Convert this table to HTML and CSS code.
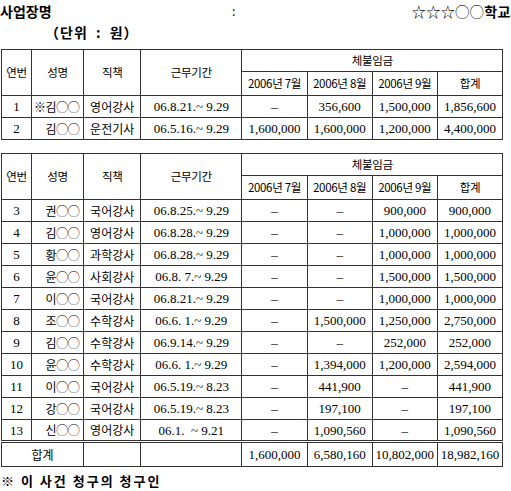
FILE: index.html
```html
<!DOCTYPE html>
<html>
<head>
<meta charset="utf-8">
<title>체불임금 내역</title>
<link rel="stylesheet" href="styles.css">
</head>
<body>

<div class="top">
  <div class="title">사업장명</div>
  <div class="colon">:</div>
  <div class="school">☆☆☆◯◯<b>학교</b></div>
</div>
<div class="unit">（단위 : 원）</div>

<table class="pay first">
  <colgroup>
    <col class="c-no"><col class="c-name"><col class="c-job"><col class="c-date">
    <col class="c-m"><col class="c-m"><col class="c-m"><col class="c-m">
  </colgroup>
  <tr class="h1">
    <th rowspan="2">연번</th>
    <th rowspan="2">성명</th>
    <th rowspan="2">직책</th>
    <th rowspan="2">근무기간</th>
    <th colspan="4">체불임금</th>
  </tr>
  <tr class="h2">
    <th>2006년 7월</th>
    <th>2006년 8월</th>
    <th>2006년 9월</th>
    <th>합계</th>
  </tr>
  <tr>
    <td class="num">1</td><td class="name">※김◯◯</td><td class="txt">영어강사</td><td class="num">06.8.21.~ 9.29</td>
    <td class="num">–</td><td class="num">356,600</td><td class="num">1,500,000</td><td class="num">1,856,600</td>
  </tr>
  <tr>
    <td class="num">2</td><td class="name">김◯◯</td><td class="txt">운전기사</td><td class="num">06.5.16.~ 9.29</td>
    <td class="num">1,600,000</td><td class="num">1,600,000</td><td class="num">1,200,000</td><td class="num">4,400,000</td>
  </tr>
</table>

<table class="pay">
  <colgroup>
    <col class="c-no"><col class="c-name"><col class="c-job"><col class="c-date">
    <col class="c-m"><col class="c-m"><col class="c-m"><col class="c-m">
  </colgroup>
  <tr class="h1">
    <th rowspan="2">연번</th>
    <th rowspan="2">성명</th>
    <th rowspan="2">직책</th>
    <th rowspan="2">근무기간</th>
    <th colspan="4">체불임금</th>
  </tr>
  <tr class="h2">
    <th>2006년 7월</th>
    <th>2006년 8월</th>
    <th>2006년 9월</th>
    <th>합계</th>
  </tr>
  <tr>
    <td class="num">3</td><td class="name">권◯◯</td><td class="txt">국어강사</td><td class="num">06.8.25.~ 9.29</td>
    <td class="num">–</td><td class="num">–</td><td class="num">900,000</td><td class="num">900,000</td>
  </tr>
  <tr>
    <td class="num">4</td><td class="name">김◯◯</td><td class="txt">영어강사</td><td class="num">06.8.28.~ 9.29</td>
    <td class="num">–</td><td class="num">–</td><td class="num">1,000,000</td><td class="num">1,000,000</td>
  </tr>
  <tr>
    <td class="num">5</td><td class="name">황◯◯</td><td class="txt">과학강사</td><td class="num">06.8.28.~ 9.29</td>
    <td class="num">–</td><td class="num">–</td><td class="num">1,000,000</td><td class="num">1,000,000</td>
  </tr>
  <tr>
    <td class="num">6</td><td class="name">윤◯◯</td><td class="txt">사회강사</td><td class="num">06.8.&nbsp;7.~ 9.29</td>
    <td class="num">–</td><td class="num">–</td><td class="num">1,500,000</td><td class="num">1,500,000</td>
  </tr>
  <tr>
    <td class="num">7</td><td class="name">이◯◯</td><td class="txt">국어강사</td><td class="num">06.8.21.~ 9.29</td>
    <td class="num">–</td><td class="num">–</td><td class="num">1,000,000</td><td class="num">1,000,000</td>
  </tr>
  <tr>
    <td class="num">8</td><td class="name">조◯◯</td><td class="txt">수학강사</td><td class="num">06.6.&nbsp;1.~ 9.29</td>
    <td class="num">–</td><td class="num">1,500,000</td><td class="num">1,250,000</td><td class="num">2,750,000</td>
  </tr>
  <tr>
    <td class="num">9</td><td class="name">김◯◯</td><td class="txt">수학강사</td><td class="num">06.9.14.~ 9.29</td>
    <td class="num">–</td><td class="num">–</td><td class="num">252,000</td><td class="num">252,000</td>
  </tr>
  <tr>
    <td class="num">10</td><td class="name">윤◯◯</td><td class="txt">수학강사</td><td class="num">06.6.&nbsp;1.~ 9.29</td>
    <td class="num">–</td><td class="num">1,394,000</td><td class="num">1,200,000</td><td class="num">2,594,000</td>
  </tr>
  <tr>
    <td class="num">11</td><td class="name">이◯◯</td><td class="txt">국어강사</td><td class="num">06.5.19.~ 8.23</td>
    <td class="num">–</td><td class="num">441,900</td><td class="num">–</td><td class="num">441,900</td>
  </tr>
  <tr>
    <td class="num">12</td><td class="name">강◯◯</td><td class="txt">국어강사</td><td class="num">06.5.19.~ 8.23</td>
    <td class="num">–</td><td class="num">197,100</td><td class="num">–</td><td class="num">197,100</td>
  </tr>
  <tr>
    <td class="num">13</td><td class="name">신◯◯</td><td class="txt">영어강사</td><td class="num">06.1.&nbsp;&nbsp;~ 9.21</td>
    <td class="num">–</td><td class="num">1,090,560</td><td class="num">–</td><td class="num">1,090,560</td>
  </tr>
  <tr class="total">
    <td colspan="2" class="txt">합계</td><td></td><td></td>
    <td class="num">1,600,000</td><td class="num">6,580,160</td><td class="num">10,802,000</td><td class="num">18,982,160</td>
  </tr>
</table>

<div class="note">※ 이 사건 청구의 청구인</div>

</body>
</html>
```

FILE: styles.css
```css
body {
    margin: 0;
    font-family: "Noto Sans CJK KR", sans-serif;
    color: #000;
    background-color: #fff;
}

.top {
    display: grid;
    grid-template-columns: 232px auto 1fr;
    align-items: center;
    height: 21px;
    font-size: 14px;
    line-height: 1;
}

.title {
    font-weight: 700;
}

.colon {
    font-size: 12px;
}

.school {
    text-align: right;
    font-size: 14px;
    letter-spacing: 0.5px;
}

.unit {
    height: 28px;
    padding-left: 45px;
    font-size: 14px;
    font-weight: 700;
    line-height: 22px;
    word-spacing: 4px;
    letter-spacing: 1px;
}

.pay {
    border-collapse: collapse;
    table-layout: fixed;
    width: 502px;
    margin-left: 1px;
}

.pay.first {
    margin-bottom: 13px;
}

.c-no { width: 30px; }
.c-name { width: 52px; }
.c-job { width: 57px; }
.c-date { width: 101px; }
.c-m { width: 65px; }

.pay th,
.pay td {
    border: 1px solid #333;
    padding: 0;
    text-align: center;
    white-space: nowrap;
    line-height: 1;
    overflow: hidden;
}

.pay th {
    font-weight: normal;
    font-size: 11.5px;
    letter-spacing: -0.3px;
}

.pay tr {
    height: 22px;
}

.pay .h2 {
    height: 24px;
}

.num {
    font-family: "Liberation Serif", "Noto Sans CJK KR", serif;
    font-size: 13px;
}

.txt {
    font-size: 12px;
}

.name {
    text-align: right !important;
    padding-right: 4px !important;
    font-size: 12px;
    letter-spacing: -0.5px;
}

.total td {
    height: 23px;
    border-top: 3px double #333;
}

.note {
    margin-top: 7px;
    padding-left: 1px;
    font-size: 13px;
    font-weight: 700;
    line-height: 14px;
    letter-spacing: 2px;
}
```
